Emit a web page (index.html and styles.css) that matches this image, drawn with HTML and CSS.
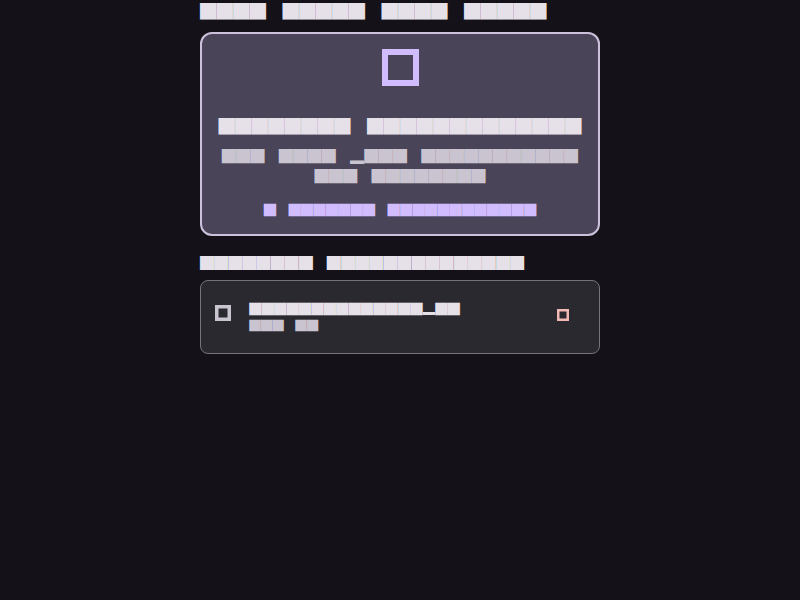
FILE: index.html
```html
<!DOCTYPE html>
<html lang="ko">
<head>
<meta charset="utf-8">
<title>Upload</title>
<link rel="stylesheet" href="styles.css">
</head>
<body>
<div class="page">
  <nav class="nav">
    <span class="nav-item">████</span>
    <span class="nav-item">█████</span>
    <span class="nav-item">████</span>
    <span class="nav-item">█████</span>
  </nav>

  <section class="drop">
    <svg class="drop-icon" width="37" height="37" viewBox="0 0 37 37" aria-hidden="true">
      <rect x="3" y="3" width="31" height="31" fill="none" stroke="#D0BCFF" stroke-width="6"/>
    </svg>
    <h2 class="drop-title">████████　█████████████</h2>
    <p class="drop-desc">███　████　▂███　███████████<br>███　████████</p>
    <p class="drop-link">█　███████　████████████</p>
  </section>

  <h3 class="section-title">████████　██████████████</h3>

  <div class="file">
    <svg class="file-icon" width="16" height="16" viewBox="0 0 16 16" aria-hidden="true">
      <rect x="1.75" y="1.75" width="12.5" height="12.5" fill="none" stroke="#CAC4D0" stroke-width="3.5"/>
    </svg>
    <div class="file-text">
      <div class="file-name">██████████████▂██</div>
      <div class="file-size">███　██</div>
    </div>
    <svg class="file-delete" width="12" height="12" viewBox="0 0 12 12" aria-hidden="true">
      <rect x="1.25" y="1.25" width="9.5" height="9.5" fill="none" stroke="#F2B8B5" stroke-width="2.5"/>
    </svg>
  </div>
</div>
</body>
</html>
```

FILE: styles.css
```css
html, body {
  margin: 0;
  padding: 0;
  background: #141218;
}

body {
  font-family: "Noto Sans CJK KR", "Noto Sans", sans-serif;
  color: #E6E0E9;
}

.page {
  width: 400px;
  margin: 0 auto;
}

.nav {
  display: flex;
  gap: 16.5px;
  font-size: 16.5px;
  line-height: 22px;
  margin-bottom: 10px;
}

.drop {
  box-sizing: border-box;
  background: #4A4458;
  border: 2px solid #CCC2DC;
  border-radius: 12px;
  padding: 15px 16px 14.6px;
  display: flex;
  flex-direction: column;
  align-items: center;
  text-align: center;
}

.drop-icon {
  display: block;
}

.drop-title {
  margin: 27.5px 0 0;
  font-size: 16.5px;
  font-weight: normal;
  line-height: 24px;
  color: #E6E0E9;
}

.drop-desc {
  margin: 8.85px 0 0;
  font-size: 14.25px;
  line-height: 20px;
  color: #CAC4D0;
  white-space: nowrap;
}

.drop-link {
  margin: 13.5px 0 0;
  font-size: 12.4px;
  line-height: 20px;
  color: #D0BCFF;
}

.section-title {
  margin: 15.7px 0 8px;
  font-size: 14.1px;
  font-weight: normal;
  line-height: 20px;
  color: #E6E0E9;
}

.file {
  box-sizing: border-box;
  height: 74px;
  background: #2B2930;
  border: 1px solid #77737d;
  border-radius: 8px;
  display: flex;
  align-items: flex-start;
  padding: 0 30px 0 14.3px;
}

.file-icon {
  display: block;
  margin-top: 24.3px;
  flex: none;
}

.file-text {
  margin-top: 20px;
  margin-left: 18px;
  flex: 1;
}

.file-name {
  font-size: 12.4px;
  line-height: 16px;
  color: #E6E0E9;
}

.file-size {
  font-size: 11.5px;
  line-height: 16px;
  color: #CAC4D0;
}

.file-delete {
  display: block;
  flex: none;
  margin-top: 28px;
}
```
